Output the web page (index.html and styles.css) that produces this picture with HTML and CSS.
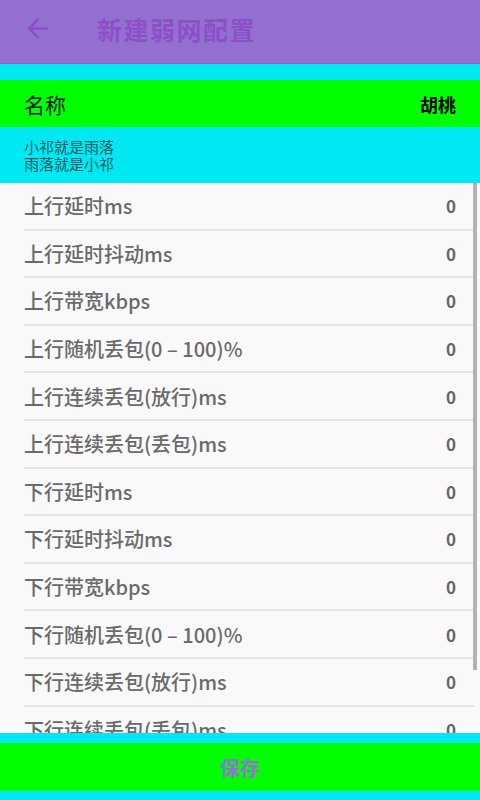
FILE: index.html
```html
<!DOCTYPE html>
<html lang="zh">
<head>
<meta charset="utf-8">
<title>新建弱网配置</title>
<link rel="stylesheet" href="styles.css">
</head>
<body>
<div class="app">
  <header class="toolbar">
    <svg class="back" viewBox="0 0 24 24" aria-hidden="true"><path d="M20 11H7.83l5.59-5.59L12 4l-8 8 8 8 1.41-1.41L7.83 13H20v-2z"/></svg>
    <h1 class="title">新建弱网配置</h1>
  </header>
  <div class="strip"></div>
  <div class="name-row">
    <span class="name-label">名称</span>
    <span class="name-value">胡桃</span>
  </div>
  <div class="desc">
    <div>小祁就是雨落</div>
    <div>雨落就是小祁</div>
  </div>
  <div class="list">
    <div class="row"><span class="label">上行延时ms</span><span class="value">0</span></div>
    <div class="row"><span class="label">上行延时抖动ms</span><span class="value">0</span></div>
    <div class="row"><span class="label">上行带宽kbps</span><span class="value">0</span></div>
    <div class="row"><span class="label">上行随机丢包(0 – 100)%</span><span class="value">0</span></div>
    <div class="row"><span class="label">上行连续丢包(放行)ms</span><span class="value">0</span></div>
    <div class="row"><span class="label">上行连续丢包(丢包)ms</span><span class="value">0</span></div>
    <div class="row"><span class="label">下行延时ms</span><span class="value">0</span></div>
    <div class="row"><span class="label">下行延时抖动ms</span><span class="value">0</span></div>
    <div class="row"><span class="label">下行带宽kbps</span><span class="value">0</span></div>
    <div class="row"><span class="label">下行随机丢包(0 – 100)%</span><span class="value">0</span></div>
    <div class="row"><span class="label">下行连续丢包(放行)ms</span><span class="value">0</span></div>
    <div class="row"><span class="label">下行连续丢包(丢包)ms</span><span class="value">0</span></div>
    <div class="scrollbar"></div>
  </div>
  <footer class="footer">
    <div class="save">保存</div>
  </footer>
</div>
</body>
</html>
```
FILE: styles.css
```css
* { box-sizing: border-box; }
html, body { margin: 0; padding: 0; }
body {
  width: 480px;
  height: 800px;
  overflow: hidden;
  font-family: "Noto Sans CJK SC", "Noto Sans", sans-serif;
  background: #f9f9f9;
}
.app {
  display: flex;
  flex-direction: column;
  height: 800px;
}
.toolbar {
  height: 64px;
  flex: 0 0 64px;
  background: #9370cf;
  display: flex;
  align-items: center;
  padding-left: 22px;
  border-bottom: 1px solid #8a62c6;
}
.back {
  width: 31px;
  height: 31px;
  fill: #8c4fc9;
  margin-top: -7px;
}
.title {
  margin: -6px 0 0 44px;
  font-size: 25px;
  font-weight: 700;
  color: #8b50c8;
  letter-spacing: 1.5px;
}
.strip {
  flex: 0 0 16px;
  background: #00e8f2;
}
.name-row {
  flex: 0 0 47px;
  background: #00ff00;
  display: flex;
  align-items: center;
  justify-content: space-between;
  padding: 0 24px;
}
.name-label {
  font-size: 21px;
  color: #111;
}
.name-value {
  font-size: 18px;
  font-weight: 700;
  color: #000;
}
.desc {
  flex: 0 0 56px;
  background: #00e8f2;
  display: flex;
  flex-direction: column;
  justify-content: center;
  padding-left: 24px;
  font-size: 15px;
  line-height: 17px;
  color: #0b5a66;
}
.list {
  flex: 1 1 auto;
  position: relative;
  overflow: hidden;
  background: #f9f9f9;
}
.row {
  height: 47.6px;
  margin: 0 6px 0 24px;
  padding-right: 18px;
  border-bottom: 2px solid #e4e4e4;
  display: flex;
  align-items: center;
  justify-content: space-between;
  color: #6a6a6a;
}
.label {
  font-size: 20px;
  font-weight: 500;
}
.value {
  font-size: 17px;
  font-weight: 700;
  color: #666;
}
.scrollbar {
  position: absolute;
  top: 0;
  right: 3px;
  width: 4px;
  height: 487px;
  background: #b2b2b2;
}
.footer {
  flex: 0 0 67px;
  background: #00e8f2;
  padding: 10px 0 9px;
}
.save {
  height: 48px;
  background: #00ff00;
  display: flex;
  align-items: center;
  justify-content: center;
  font-size: 20px;
  font-weight: 700;
  color: #9370db;
}
```
